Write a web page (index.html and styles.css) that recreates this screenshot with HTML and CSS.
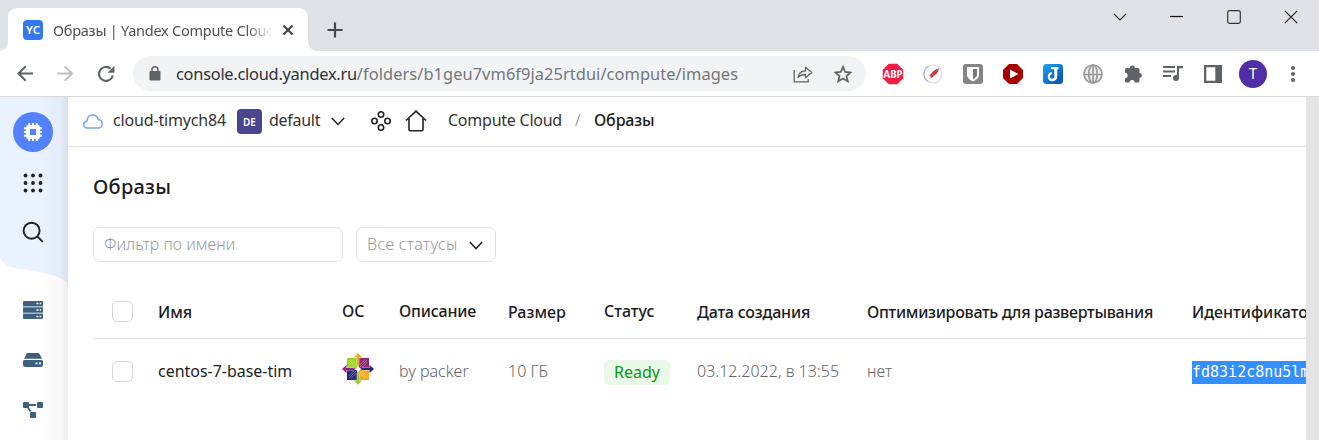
FILE: index.html
```html
<!DOCTYPE html>
<html lang="ru">
<head>
<meta charset="utf-8">
<title>Образы | Yandex Compute Cloud</title>
<link rel="stylesheet" href="styles.css">
</head>
<body>
<div class="window">
  <div class="tabstrip">
    <div class="tab">
      <span class="favicon">YC</span>
      <span class="tab-title">Образы | Yandex Compute Cloud</span>
      <svg class="tab-close" width="12" height="12" viewBox="0 0 12 12"><path d="M1.500 1.500l9 9m0-9l-9 9" stroke="#3c4043" stroke-width="2"/></svg>
    </div>
    <svg class="new-tab" width="16" height="16" viewBox="0 0 16 16"><path d="M8 .5v15M.5 8h15" stroke="#45484b" stroke-width="2.200"/></svg>
    <div class="controls">
      <svg width="14" height="14" viewBox="0 0 14 14"><path d="M1 4l6 6 6-6" fill="none" stroke="#333" stroke-width="1.100"/></svg>
      <svg width="14" height="14" viewBox="0 0 14 14"><path d="M0 6.500h13" stroke="#111" stroke-width="1.200"/></svg>
      <svg width="14" height="14" viewBox="0 0 14 14"><rect x=".7" y=".7" width="12.600" height="12.600" rx="1.800" fill="none" stroke="#333" stroke-width="1.200"/></svg>
      <svg width="14" height="14" viewBox="0 0 14 14"><path d="M.8.8l12.400 12.400m0-12.400L.8 13.200" stroke="#222" stroke-width="1.200"/></svg>
    </div>
  </div>

  <div class="toolbar">
    <div class="nav">
      <svg width="18" height="18" viewBox="0 0 18 18" fill="none" stroke="#5f6368" stroke-width="2"><path d="M16 8.500H1.500M8.700 1.300L1.500 8.500l7.200 7.200"/></svg>
      <svg width="18" height="18" viewBox="0 0 18 18" fill="none" stroke="#bdbfc1" stroke-width="2"><path d="M.5 8.500H15M7.800 1.300L15 8.500l-7.200 7.200"/></svg>
      <svg width="18" height="18" viewBox="0 0 18 18"><path d="M15.800 10.500A7 7 0 1 1 13.700 3.700" fill="none" stroke="#5f6368" stroke-width="2.100"/><path d="M17.500.8v7h-7z" fill="#5f6368"/></svg>
    </div>
    <div class="omnibox">
      <svg width="12" height="15" viewBox="0 0 12 15"><rect x=".5" y="5" width="11" height="9.500" rx="1.300" fill="#5f6368"/><path d="M3 6V3.800a3 3 0 0 1 6 0V6" fill="none" stroke="#5f6368" stroke-width="1.500"/></svg>
      <span class="url"><b>console.cloud.yandex.ru</b>/folders/b1geu7vm6f9ja25rtdui/compute/images</span>
      <svg class="share" width="20" height="18" viewBox="0 0 20 18" fill="none" stroke="#5f6368" stroke-width="1.300"><path d="M1.200 5v11.800h14V14"/><path d="M5 12.500c.5-4.600 3.200-6.500 7.500-6.700V2.200l6.300 5.300-6.300 5.200V9.500c-3.400-.1-5.600.7-7.500 3z" stroke-linejoin="round"/></svg>
      <svg class="star" width="18" height="18" viewBox="0 0 18 18"><path d="M9 1.800l2.100 5.100 5.600.5-4.200 3.600 1.300 5.300L9 13.500l-4.800 2.800L5.500 11 1.300 7.400l5.600-.5z" fill="none" stroke="#5f6368" stroke-width="1.700"/></svg>
    </div>
    <div class="extensions">
      <svg width="22" height="22" viewBox="0 0 22 22"><path d="M6.700.8h8.600l5.900 5.900v8.600l-5.900 5.900H6.700L.8 15.300V6.700z" fill="#f31c43"/><text x="11" y="15" text-anchor="middle" class="abp" textLength="19" lengthAdjust="spacingAndGlyphs">ABP</text></svg>
      <svg width="20" height="20" viewBox="0 0 20 20"><circle cx="10" cy="10" r="9" fill="#fbfbfc" stroke="#dcdde1" stroke-width="1.200"/><path d="M5 2.500A9 9 0 0 0 5 17.500" fill="none" stroke="#a3b8ea" stroke-width="1.300"/><path d="M15.800 4.500q-3 .2-5 2.300l-4.300 4.900 2.300 2 4.900-4.200q2-2 2.100-5z" fill="#c9353b"/><path d="M16 4.300l-2.700 2.800M7 14.500l1.500-1.700M8.500 9l2.500 2.500" stroke="#8e8793" stroke-width="1" fill="none"/></svg>
      <svg width="20" height="20" viewBox="0 0 20 20"><rect width="20" height="20" rx="3" fill="#858585"/><path d="M4 3h12v7.500c0 3.200-2.800 5.300-6 7-3.200-1.700-6-3.800-6-7z" fill="#fff"/><path d="M10 5h4v5.500c0 2-1.900 3.400-4 4.700z" fill="#777"/></svg>
      <svg width="20" height="20" viewBox="0 0 20 20"><path d="M6 0h8l6 6v8l-6 6H6l-6-6V6z" fill="#a70000"/><path d="M7 5.500l8.500 4.500L7 14.500z" fill="#fff"/></svg>
      <svg width="20" height="20" viewBox="0 0 20 20"><defs><linearGradient id="j" x1="0" y1="0" x2="1" y2="1"><stop offset="0" stop-color="#1aa4f6"/><stop offset="1" stop-color="#084dad"/></linearGradient></defs><rect width="20" height="20" rx="3.500" fill="url(#j)"/><path d="M8 3h7.500v2.200h-1.300V12.600a4.700 4.700 0 1 1-5.500-4.700v2.500a2.200 2.200 0 1 0 2.600 2.200V5.200H8z" fill="#fff"/></svg>
      <svg width="20" height="20" viewBox="0 0 20 20" fill="none" stroke="#999" stroke-width="1.700"><circle cx="10" cy="10" r="9" fill="#eee"/><ellipse cx="10" cy="10" rx="4.200" ry="9"/><path d="M1 10.500h18M10 1v18"/></svg>
      <svg width="20" height="20" viewBox="0 0 20 20"><path d="M2 5.500Q2 4 3.500 4H7a2.400 2.400 0 1 1 4.800 0H15q1.500 0 1.500 1.500V9a2.400 2.400 0 1 1 0 4.800v3.200Q16.500 18.500 15 18.500h-3.300a2.600 2.600 0 0 0-5.200 0h-3Q2 18.500 2 17v-3a2.600 2.600 0 0 0 0-5.200z" fill="#5f6368"/></svg>
      <svg width="20" height="17" viewBox="0 0 20 17" fill="#5f6368"><path d="M0 1h12v2H0zM0 5.500h12v2H0zM0 10h8v2H0zM14 1h6v2.200h-4V13.200h-2z"/><circle cx="13" cy="13" r="3"/></svg>
      <svg width="18" height="18" viewBox="0 0 18 18"><path fill-rule="evenodd" d="M0 0h18v18H0zM2.300 2.300v13.400h9V2.300z" fill="#5f6368"/></svg>
      <span class="avatar">T</span>
      <svg width="4" height="16" viewBox="0 0 4 16" fill="#5f6368"><circle cx="2" cy="2" r="2"/><circle cx="2" cy="8" r="2"/><circle cx="2" cy="14" r="2"/></svg>
    </div>
  </div>

  <div class="page">
    <aside class="sidebar">
      <svg class="wave" width="68" height="190" viewBox="0 0 68 190"><path d="M0 0h68v186C57 177 42 176 16 171 8 170 4 167 0 161z" fill="#eaf1ff"/></svg>
      <span class="service"><svg width="18" height="18" viewBox="0 0 18 18"><path d="M5.200 0v18M9 0v18M12.800 0v18M0 5.200h18M0 9h18M0 12.800h18" stroke="#fff" stroke-width="2"/><rect x="2" y="2" width="14" height="14" rx="2" fill="#fff"/><rect x="6" y="6" width="6" height="6" fill="#5282ff"/></svg></span>
      <svg width="20" height="20" viewBox="0 0 20 20" fill="#222"><circle cx="2.500" cy="2.500" r="1.900"/><circle cx="10" cy="2.500" r="1.900"/><circle cx="17.500" cy="2.500" r="1.900"/><circle cx="2.500" cy="10" r="1.900"/><circle cx="10" cy="10" r="1.900"/><circle cx="17.500" cy="10" r="1.900"/><circle cx="2.500" cy="17.500" r="1.900"/><circle cx="10" cy="17.500" r="1.900"/><circle cx="17.500" cy="17.500" r="1.900"/></svg>
      <svg class="search" width="22" height="22" viewBox="0 0 22 22" fill="none" stroke="#222" stroke-width="1.900"><circle cx="9.600" cy="9.700" r="8"/><path d="M15.300 15.300l5.500 5.500"/></svg>
      <svg class="servers" width="20" height="18" viewBox="0 0 20 18"><rect y="1" width="20" height="16" fill="#a9b9c8"/><g fill="#3e5f80"><rect width="20" height="5" rx="1"/><rect y="6.500" width="20" height="5" rx="1"/><rect y="13" width="20" height="5" rx="1"/></g><path d="M13.500 2.500h2m1.200 0h1.500M13.500 9h2m1.200 0h1.500m-4.700 6.500h2m1.200 0h1.500" stroke="#fff" stroke-width="1.600"/></svg>
      <svg class="disk" width="20" height="14" viewBox="0 0 20 14"><path d="M5 0h10q1 0 1.600 1L19 5.700H1L3.400 1Q4 0 5 0zM1.500 7h17Q20 7 20 8.500v3.300q0 2.200-2.200 2.200H2.200Q0 14 0 11.800V8.500Q0 7 1.500 7z" fill="#3e5f80"/><path d="M12.500 10.300h2m1.500 0h2" stroke="#fff" stroke-width="1.700"/></svg>
      <svg class="topology" width="20" height="16" viewBox="0 0 20 16" fill="#3e5f80"><rect width="6" height="6" rx="1"/><rect x="14" width="6" height="6" rx="1"/><rect x="7" y="10" width="6" height="6" rx="1"/><path d="M3 3h10M4 4l3.500 5.500" stroke="#3e5f80" stroke-width="1.800"/></svg>
    </aside>

    <main class="main">
      <header class="header">
        <svg class="cloud" width="20" height="15" viewBox="0 0 20 15"><path d="M4.700 14.100C2.300 14.100.8 12.600.8 10.500c0-1.900 1.300-3.300 3.200-3.500C4.200 3.200 6.600.9 9.700.9c2.800 0 5 1.800 5.500 4.600 2.500.2 4 2 4 4.300s-1.800 4.300-4.300 4.300z" fill="none" stroke="#7da2fa" stroke-width="1.500"/></svg>
        <span class="text cloud-name">cloud-timych84</span>
        <span class="folder">DE</span>
        <span class="text folder-name">default</span>
        <svg class="chevron" width="14" height="9" viewBox="0 0 14 9"><path d="M.8 1l6.200 6.500L13.200 1" fill="none" stroke="#222" stroke-width="1.500"/></svg>
        <svg class="groups" width="20" height="20" viewBox="0 0 20 20" fill="none" stroke="#222" stroke-width="1.600"><circle cx="10" cy="3.500" r="2.700"/><circle cx="3.500" cy="10" r="2.700"/><circle cx="16.500" cy="10" r="2.700"/><circle cx="10" cy="16.500" r="2.700"/></svg>
        <svg class="home" width="22" height="22" viewBox="0 0 22 22" fill="none" stroke="#222" stroke-width="1.600"><path d="M1 10.500L11 1.200l10 9.300M4 8.500v11q0 1.300 1.300 1.300h11.400q1.300 0 1.300-1.300v-11"/></svg>
        <span class="text crumb-service">Compute Cloud</span>
        <span class="slash">/</span>
        <span class="text crumb-current">Образы</span>
      </header>

      <section class="content">
        <h1>Образы</h1>
        <div class="filters">
          <div class="field filter-name"><span class="text filter-label">Фильтр по имени</span></div>
          <div class="field filter-status"><span class="text status-label">Все статусы</span><svg class="status-chevron" width="14" height="9" viewBox="0 0 14 9"><path d="M.8 1l6.200 6.500L13.200 1" fill="none" stroke="#222" stroke-width="1.600"/></svg></div>
        </div>
        <div class="row head">
          <span class="checkbox"></span>
          <span class="text h-name">Имя</span>
          <span class="text h-os raised">ОС</span>
          <span class="text h-desc raised">Описание</span>
          <span class="text h-size">Размер</span>
          <span class="text h-status raised">Статус</span>
          <span class="text h-date">Дата создания</span>
          <span class="text h-opt">Оптимизировать для развертывания</span>
          <span class="text h-id">Идентификатор</span>
        </div>
        <div class="row item">
          <span class="checkbox"></span>
          <span class="text name">centos-7-base-tim</span>
          <svg class="centos" width="32" height="32" viewBox="0 0 32 32">
            <path d="M16 0l4 4.500h-8z" fill="#efa724"/><path d="M16 32l4-4.500h-8z" fill="#9ccd2a"/><path d="M0 16l4.500-4v8z" fill="#932279"/><path d="M32 16l-4.500-4v8z" fill="#262577"/>
            <path d="M5 5h10.500v10.500H5z" fill="#9ccd2a"/><path d="M16.500 5H27v10.500H16.500z" fill="#932279"/><path d="M5 16.500h10.500V27H5z" fill="#262577"/><path d="M16.500 16.500H27V27H16.500z" fill="#efa724"/>
            <path d="M15 3h2v11h-2z" fill="#efa724"/><path d="M15 18h2v11h-2z" fill="#9ccd2a"/><path d="M3 15h11v2H3z" fill="#932279"/><path d="M18 15h11v2H18z" fill="#262577"/>
            <path d="M7 7l18 18M25 7L7 25M14.300 5v7L9 6.700M17.700 5v7L23 6.700M5 14.300h7L6.700 9M27 14.300h-7L25.300 9M5 17.700h7L6.700 23M27 17.700h-7l5.300 5.300M14.300 27v-7L9 25.300M17.700 27v-7l5.300 5.300" fill="none" stroke="#fff" stroke-opacity=".45" stroke-width=".7"/><path d="M16 12l1.200 2.800L20 16l-2.800 1.200L16 20l-1.200-2.800L12 16l2.800-1.200z" fill="#fff"/>
          </svg>
          <span class="text desc muted">by packer</span>
          <span class="text size muted">10 ГБ</span>
          <span class="badge"><span class="text ready">Ready</span></span>
          <span class="text date muted">03.12.2022, в 13:55</span>
          <span class="text muted opt">нет</span>
          <span class="identifier">fd83i2c8nu5lm</span>
        </div>
      </section>
    </main>
    <div class="scrollbar"></div>
  </div>
</div>
</body>
</html>
```
FILE: styles.css
```css
* { box-sizing: border-box; }
body { margin: 0; overflow: hidden; background: #fff; color: #1c1c1c; font: 300 16px/20px "Noto Sans", "Open Sans", sans-serif; }
svg { display: block; flex: none; }
.window { width: 1319px; height: 440px; display: flex; flex-direction: column; }
.text { white-space: nowrap; justify-self: start; flex: none; }
.tabstrip { flex: none; height: 51px; background: #dee1e6; display: flex; align-items: flex-start; }
.tab { width: 300px; height: 43px; margin: 8px 0 0 8px; padding: 0 14px 0 15px; background: #fff; border-radius: 9px 9px 0 0; display: flex; align-items: center; position: relative; }
.tab::before, .tab::after { content: ""; position: absolute; bottom: 0; width: 9px; height: 9px; }
.tab::before { right: 100%; background: radial-gradient(circle at 0 0, transparent 8.5px, #fff 9px); }
.tab::after { left: 100%; background: radial-gradient(circle at 100% 0, transparent 8.5px, #fff 9px); }
.favicon { flex: none; width: 20px; height: 20px; border-radius: 4px; background: #3478ef; color: #fff; font-size: 11.5px; font-weight: 600; text-align: center; }
.tab-title { width: 220px; margin-left: 10px; overflow: hidden; white-space: nowrap; font-size: 14.5px; font-weight: 400; letter-spacing: -.25px; color: #4d5053; -webkit-mask-image: linear-gradient(90deg, #000 88%, transparent); mask-image: linear-gradient(90deg, #000 88%, transparent); }
.tab-close { margin-left: 9px; }
.new-tab { margin: 22px 0 0 19px; }
.controls { display: flex; gap: 43px; margin: 10px 21px 0 auto; }
.toolbar { flex: none; height: 46px; border-bottom: 1px solid #dadada; display: flex; align-items: center; padding-left: 17px; }
.nav { display: flex; gap: 22px; width: 116px; }
.omnibox { flex: none; width: 733px; height: 35px; border-radius: 18px; background: #f1f3f4; display: flex; align-items: center; padding: 0 14px 0 16px; }
.url { flex: none; margin-left: 15px; font-size: 16.4px; font-weight: 400; color: #73767a; white-space: nowrap; letter-spacing: .07px; }
.url b { font-weight: 400; color: #303134; letter-spacing: -.26px; }
.share { margin-left: auto; }
.star { margin-left: 21px; }
.extensions { flex: none; margin-left: 7px; display: grid; grid-template-columns: repeat(11, 40px); align-items: center; justify-items: center; }
.abp { font: bold 10.5px "Noto Sans", sans-serif; fill: #fff; }
.avatar { width: 28px; height: 28px; border-radius: 50%; background: #512da8; color: #fff; font: 15px/28px Roboto, sans-serif; text-align: center; }
.page { flex: 1; min-height: 0; display: flex; }
.sidebar { flex: none; width: 68px; position: relative; padding: 15px 0 0; display: flex; flex-direction: column; align-items: center; background: #fff; }
.sidebar > :not(.wave) { position: relative; margin-right: 2px; }
.sidebar::after { content: ""; position: absolute; inset: 0 0 0 auto; width: 28px; background: linear-gradient(90deg, rgba(0,0,0,0), rgba(0,0,0,.025) 70%, rgba(0,0,0,.07)); }
.sidebar > .wave { position: absolute; top: 0; left: 0; }
.service { flex: none; width: 40px; height: 40px; border-radius: 50%; background: #5282ff; display: grid; place-items: center; margin-bottom: 21px; }
.search { margin-top: 28px; }
.servers { margin-top: 58px; }
.disk { margin-top: 34px; }
.topology { margin-top: 35px; }
.main { flex: 1; min-width: 0; overflow: hidden; }
.header { height: 50px; border-bottom: 1px solid #e5e5e5; padding: 0 0 1px 15px; display: flex; align-items: center; }
.header .text, .slash { padding-bottom: 3px; }
.cloud-name, .folder-name, .crumb-service { font-weight: 400; color: #333; }
.cloud-name { width: 113px; margin-left: 10px; letter-spacing: -.16px; }
.folder { flex: none; width: 25px; height: 25px; border-radius: 4px; margin-left: 11px; background: #49458f; color: #fff; font-size: 10px; line-height: 26px; font-weight: 600; text-align: center; }
.folder-name { width: 52px; margin-left: 7px; letter-spacing: -.28px; }
.chevron { margin-left: 10px; }
.groups { margin-left: 26px; }
.home { margin-left: 14px; }
.crumb-service { width: 114px; margin-left: 21px; letter-spacing: -.24px; }
.slash { margin-left: 13px; width: 6px; color: #777; }
.crumb-current { margin-left: 13px; font-weight: 500; letter-spacing: -.15px; }
.content { padding-left: 25px; }
h1 { margin: 26px 0 0; font-size: 20px; line-height: 28px; font-weight: 500; letter-spacing: .25px; }
.filters { display: flex; gap: 13px; margin-top: 26px; }
.field { height: 35px; border: 1px solid #e0e0e0; border-radius: 7px; display: flex; align-items: center; padding: 0 10px; color: #999; }
.filter-name { width: 250px; }
.filter-label { padding-bottom: 1px; }
.filter-status { width: 140px; justify-content: space-between; padding-right: 12px; }
.status-label { padding-bottom: 2px; letter-spacing: .3px; }
.status-chevron { margin-top: 2px; }
.row { display: grid; grid-template-columns: 46px 184px 57px 109px 96px 93px 170px 325px 160px; padding-left: 19px; align-items: center; }
.head { height: 56px; margin-top: 21px; border-bottom: 1px solid #e5e5e5; font-weight: 500; padding-top: 2px; }
.raised { padding-bottom: 2px; }
.h-desc, .h-date { letter-spacing: -.2px; }
.h-opt { letter-spacing: -.29px; }
.item { height: 64px; }
.name { font-weight: 400; letter-spacing: -.03px; }
.checkbox { width: 21px; height: 21px; border: 1px solid #d7d7d7; border-radius: 5px; }
.centos { margin-top: -4px; }
.muted { color: #666; }
.badge { width: 66px; height: 25px; border-radius: 5px; background: #e9f8e9; color: #0c970c; line-height: 25px; padding-left: 10px; margin-top: 2px; font-weight: 400; }
.identifier { justify-self: start; background: #338fff; color: #fff; height: 23px; margin-top: 2px; font: 15px/23px "DejaVu Sans Mono", monospace; }
.scrollbar { flex: none; width: 13px; background: #e4e4e4; }
```
